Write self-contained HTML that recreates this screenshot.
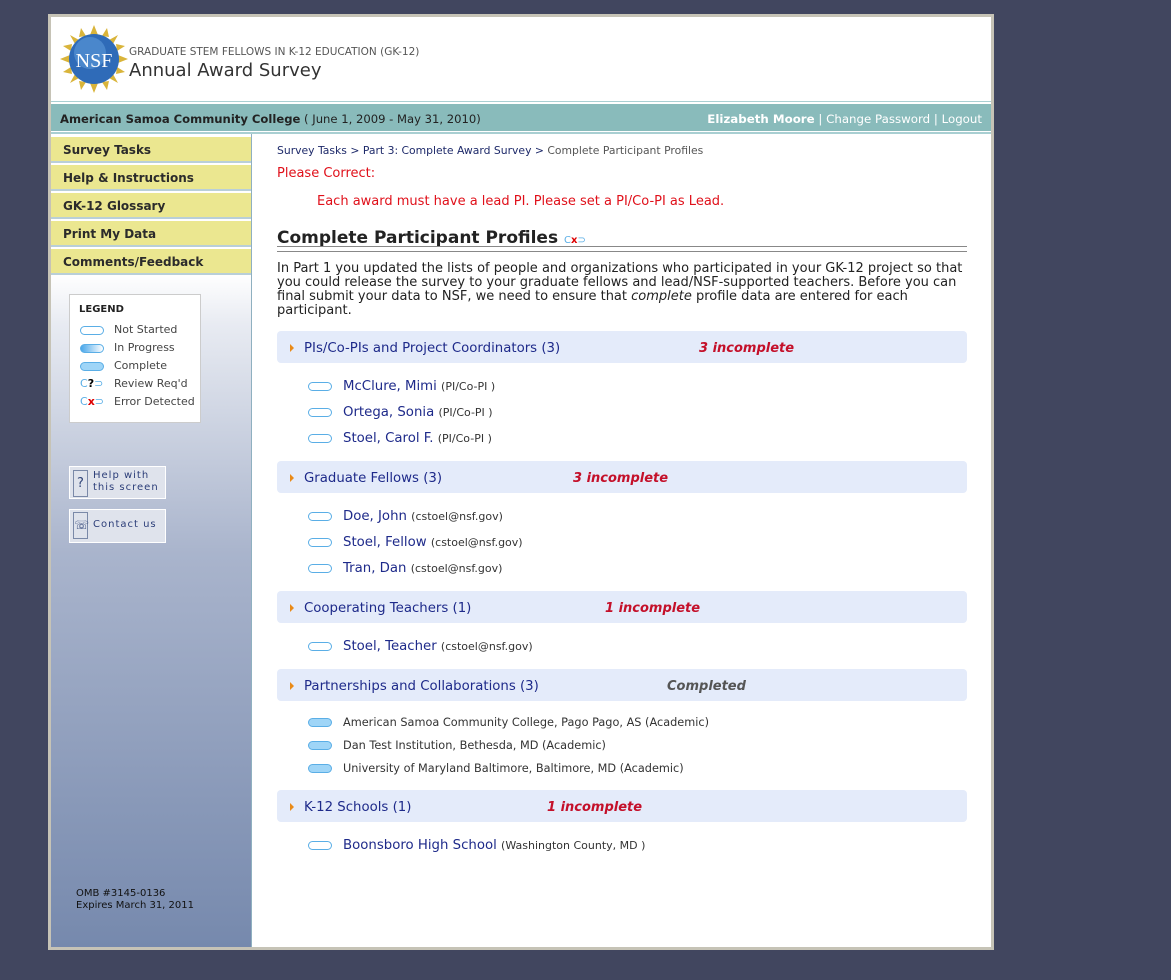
<!DOCTYPE html><html><head><style>
body{margin:0;width:1171px;height:980px;background:#41465f;font-family:"DejaVu Sans","Liberation Sans",sans-serif;position:relative;overflow:hidden}
.a{position:absolute;white-space:nowrap}
#frame{position:absolute;left:48px;top:14px;width:940px;height:930px;border:3px solid #c6c3b6;background:#fff}
.nav{position:absolute;left:51px;width:200px;height:26px;background:#ebe790;border-bottom:2px solid #b9cfd8;font-weight:bold;font-size:12px;color:#2b2b2b;line-height:26px;padding-left:12px;box-sizing:border-box}
.pill{position:absolute;width:22px;height:7px;border:1px solid #5aaee6;border-radius:5px;background:#fff}
.pill.c{background:#9fd5f7}
.hdr{position:absolute;left:277px;width:690px;height:32px;background:#e4ebfa;border-radius:4px}
.hdr .t{position:absolute;left:27px;top:10px;font-size:13.3px;color:#1e2a8a}
.hdr .tri{position:absolute;left:13px;top:13px;width:0;height:0;border-left:4px solid #e98a17;border-top:4px solid transparent;border-bottom:4px solid transparent}
.hdr .s{position:absolute;top:10px;font-size:13px;font-weight:bold;font-style:italic;color:#c4102a}
.it{position:absolute;left:343px;font-size:13.3px;color:#1e2a8a;white-space:nowrap}
.it small{font-size:11px;color:#333}
.org{position:absolute;left:343px;font-size:11.3px;color:#333;white-space:nowrap}
</style></head><body>
<div id="frame"></div>
<svg class="a" style="left:60px;top:25px" width="68" height="68" viewBox="0 0 68 68">
<g fill="#d9b43a"><polygon points="34,0 38,10 30,10"/><polygon points="34,68 38,58 30,58"/><polygon points="0,34 10,30 10,38"/><polygon points="68,34 58,30 58,38"/><polygon points="10,10 19,15 15,19"/><polygon points="58,58 49,53 53,49"/><polygon points="58,10 53,19 49,15"/><polygon points="10,58 15,49 19,53"/><polygon points="21,3 26,11 19,12"/><polygon points="47,3 49,12 42,11"/><polygon points="3,21 12,19 11,26"/><polygon points="65,21 57,26 56,19"/><polygon points="3,47 11,42 12,49"/><polygon points="65,47 56,49 57,42"/><polygon points="21,65 19,56 26,57"/><polygon points="47,65 42,57 49,56"/></g>
<circle cx="34" cy="34" r="25" fill="#2f6bb8"/><circle cx="30" cy="28" r="16" fill="#5d9ad8" opacity=".6"/>
<text x="34" y="42" font-family="Liberation Serif" font-size="20" fill="#fff" text-anchor="middle">NSF</text></svg>
<div class="a" style="left:129px;top:46px;font-size:10.5px;color:#555">GRADUATE STEM FELLOWS IN K-12 EDUCATION (GK-12)</div>
<div class="a" style="left:129px;top:60px;font-size:18px;color:#333">Annual Award Survey</div>
<div class="a" style="left:51px;top:101px;width:940px;height:1px;background:#a9cfd2"></div>
<div class="a" style="left:51px;top:104px;width:940px;height:27px;background:#89bbbb"></div>
<div class="a" style="left:51px;top:132px;width:940px;height:2px;background:#a9cfd2"></div>
<div class="a" style="left:60px;top:112px;font-size:11.6px;color:#222"><b>American Samoa Community College</b> ( June 1, 2009 - May 31, 2010)</div>
<div class="a" style="right:189px;top:112px;font-size:11.8px;color:#fff"><b>Elizabeth Moore</b> | Change Password | Logout</div>
<div class="a" style="left:51px;top:134px;width:200px;height:813px;background:linear-gradient(#fff 140px,#e8ebf2 190px,#a9b4cc 420px,#7689ad 813px);border-right:1px solid #8fb0c0"></div>
<div class="nav" style="top:137px">Survey Tasks</div>
<div class="nav" style="top:165px">Help &amp; Instructions</div>
<div class="nav" style="top:193px">GK-12 Glossary</div>
<div class="nav" style="top:221px">Print My Data</div>
<div class="nav" style="top:249px">Comments/Feedback</div>
<div class="a" style="left:69px;top:294px;width:130px;height:127px;background:#fff;border:1px solid #ccc"></div>
<div class="a" style="left:79px;top:304px;font-size:10px;font-weight:bold;color:#222">LEGEND</div>
<div class="pill" style="left:80px;top:326px"></div><div class="a" style="left:114px;top:323px;font-size:11px;color:#444">Not Started</div>
<div class="pill" style="left:80px;top:344px;background:linear-gradient(90deg,#4aa7ea,#fff)"></div><div class="a" style="left:114px;top:341px;font-size:11px;color:#444">In Progress</div>
<div class="pill c" style="left:80px;top:362px"></div><div class="a" style="left:114px;top:359px;font-size:11px;color:#444">Complete</div>
<div class="a" style="left:80px;top:377px;font-size:11px;color:#5aaee6">C<b style="color:#000">?</b>⊃</div><div class="a" style="left:114px;top:377px;font-size:11px;color:#444">Review Req'd</div>
<div class="a" style="left:80px;top:395px;font-size:11px;color:#5aaee6">C<b style="color:#d00">x</b>⊃</div><div class="a" style="left:114px;top:395px;font-size:11px;color:#444">Error Detected</div>
<div class="a" style="left:69px;top:466px;width:95px;height:31px;background:#dfe3ec;border:1px solid #fff"></div>
<div class="a" style="left:73px;top:470px;width:13px;height:25px;border:1px solid #7a89a8;font-size:13px;color:#33477a;text-align:center;line-height:25px">?</div>
<div class="a" style="left:93px;top:470px;font-size:10px;color:#2b3d78;letter-spacing:1px;line-height:12px">Help with<br>this screen</div>
<div class="a" style="left:69px;top:509px;width:95px;height:32px;background:#dfe3ec;border:1px solid #fff"></div>
<div class="a" style="left:73px;top:512px;width:13px;height:25px;border:1px solid #7a89a8;font-size:12px;color:#33477a;text-align:center;line-height:25px">☏</div>
<div class="a" style="left:93px;top:519px;font-size:10px;color:#2b3d78;letter-spacing:1px">Contact us</div>
<div class="a" style="left:76px;top:888px;font-size:10px;color:#111;line-height:12px">OMB #3145-0136<br>Expires March 31, 2011</div>
<div class="a" style="left:277px;top:144px;font-size:10.8px;color:#1e2a6a">Survey Tasks &gt; Part 3: Complete Award Survey &gt; <span style="color:#555">Complete Participant Profiles</span></div>
<div class="a" style="left:277px;top:166px;font-size:13px;color:#e0101a">Please Correct:</div>
<div class="a" style="left:317px;top:194px;font-size:13px;color:#e0101a">Each award must have a lead PI. Please set a PI/Co-PI as Lead.</div>
<div class="a" style="left:277px;top:228px;font-size:17px;font-weight:bold;color:#222">Complete Participant Profiles <span style="font-size:10px;color:#5aaee6;font-weight:normal">C<b style="color:#d00">x</b>⊃</span></div>
<div class="a" style="left:277px;top:246px;width:690px;height:4px;border-top:1px solid #888;border-bottom:1px solid #888"></div>
<div class="a" style="left:277px;top:262px;width:690px;font-size:13px;color:#222;line-height:14px;white-space:normal">In Part 1 you updated the lists of people and organizations who participated in your GK-12 project so that you could release the survey to your graduate fellows and lead/NSF-supported teachers. Before you can final submit your data to NSF, we need to ensure that <i>complete</i> profile data are entered for each participant.</div>

<div class="hdr" style="top:331px"><div class="tri"></div><div class="t">PIs/Co-PIs and Project Coordinators (3)</div><div class="s" style="left:422px">3 incomplete</div></div>
<div class="pill" style="left:308px;top:382px"></div><div class="it" style="top:379px">McClure, Mimi <small>(PI/Co-PI )</small></div>
<div class="pill" style="left:308px;top:408px"></div><div class="it" style="top:405px">Ortega, Sonia <small>(PI/Co-PI )</small></div>
<div class="pill" style="left:308px;top:434px"></div><div class="it" style="top:431px">Stoel, Carol F. <small>(PI/Co-PI )</small></div>

<div class="hdr" style="top:461px"><div class="tri"></div><div class="t">Graduate Fellows (3)</div><div class="s" style="left:296px">3 incomplete</div></div>
<div class="pill" style="left:308px;top:512px"></div><div class="it" style="top:509px">Doe, John <small>(cstoel@nsf.gov)</small></div>
<div class="pill" style="left:308px;top:538px"></div><div class="it" style="top:535px">Stoel, Fellow <small>(cstoel@nsf.gov)</small></div>
<div class="pill" style="left:308px;top:564px"></div><div class="it" style="top:561px">Tran, Dan <small>(cstoel@nsf.gov)</small></div>

<div class="hdr" style="top:591px"><div class="tri"></div><div class="t">Cooperating Teachers (1)</div><div class="s" style="left:328px">1 incomplete</div></div>
<div class="pill" style="left:308px;top:642px"></div><div class="it" style="top:639px">Stoel, Teacher <small>(cstoel@nsf.gov)</small></div>

<div class="hdr" style="top:669px"><div class="tri"></div><div class="t">Partnerships and Collaborations (3)</div><div class="s" style="left:390px;color:#555">Completed</div></div>
<div class="pill c" style="left:308px;top:718px"></div><div class="org" style="top:716px">American Samoa Community College, Pago Pago, AS (Academic)</div>
<div class="pill c" style="left:308px;top:741px"></div><div class="org" style="top:739px">Dan Test Institution, Bethesda, MD (Academic)</div>
<div class="pill c" style="left:308px;top:764px"></div><div class="org" style="top:762px">University of Maryland Baltimore, Baltimore, MD (Academic)</div>

<div class="hdr" style="top:790px"><div class="tri"></div><div class="t">K-12 Schools (1)</div><div class="s" style="left:270px">1 incomplete</div></div>
<div class="pill" style="left:308px;top:841px"></div><div class="it" style="top:838px">Boonsboro High School <small>(Washington County, MD )</small></div>
</body></html>
